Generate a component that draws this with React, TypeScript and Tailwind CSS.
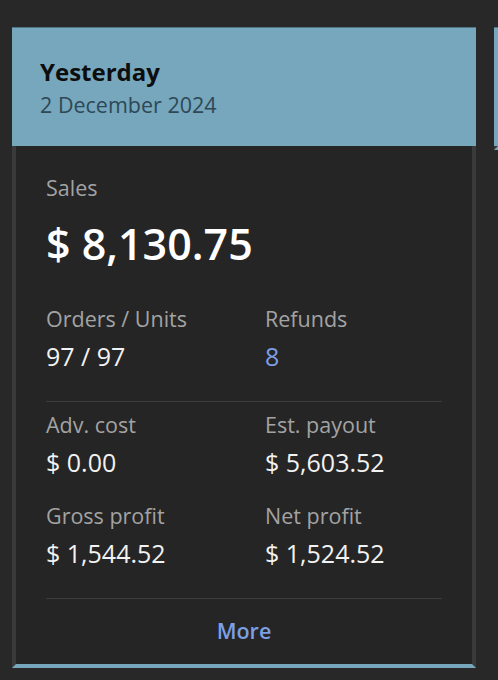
import React from 'react';

type Stat = { label: string; value: string; accent?: boolean };

const topStats: Stat[] = [
  { label: 'Orders / Units', value: '97 / 97' },
  { label: 'Refunds', value: '8', accent: true },
];

const moneyStats: Stat[] = [
  { label: 'Adv. cost', value: '$ 0.00' },
  { label: 'Est. payout', value: '$ 5,603.52' },
  { label: 'Gross profit', value: '$ 1,544.52' },
  { label: 'Net profit', value: '$ 1,524.52' },
];

const StatCell: React.FC<{ stat: Stat }> = ({ stat }) => (
  <div className="flex flex-col">
    <span className="text-[21.5px] leading-[28px] text-[#a3a3a3]">{stat.label}</span>
    <span
      className={`mt-[9px] text-[25px] leading-[28px] ${stat.accent ? 'text-[#7d9fe6]' : 'text-[#f2f2f2]'}`}
    >
      {stat.value}
    </span>
  </div>
);

const PeriodCard: React.FC = () => (
  <div className="w-[464px] shrink-0 flex flex-col">
    <div className="h-[119px] bg-[#76a7bd] border-t border-[#4f7587] pl-[28px] pt-[29px]">
      <div className="text-[24px] leading-[30px] font-bold text-[#0d0d0d]">Yesterday</div>
      <div className="mt-[4px] text-[21.5px] leading-[28px] text-[#2e4856]">2 December 2024</div>
    </div>
    <div className="bg-[#252525] border-x-4 border-[#3a3a3a] border-b-4 border-b-[#76a7bd] px-[30px]">
      <div className="pt-[28px] text-[21.5px] leading-[28px] text-[#a3a3a3]">Sales</div>
      <div className="mt-[18px] text-[43px] leading-[48px] font-semibold text-white">$ 8,130.75</div>
      <div className="mt-[37px] grid grid-cols-[219px_1fr] pb-[31px]">
        {topStats.map((s) => (
          <StatCell key={s.label} stat={s} />
        ))}
      </div>
      <div className="border-t border-[#3c3c3c]" />
      <div className="grid grid-cols-[219px_1fr] gap-y-[26px] pt-[9px] pb-[31px]">
        {moneyStats.map((s) => (
          <StatCell key={s.label} stat={s} />
        ))}
      </div>
      <div className="border-t border-[#3c3c3c]" />
      <div className="h-[65px] flex items-center justify-center">
        <span className="text-[21.5px] font-semibold text-[#7d9fe6]">More</span>
      </div>
    </div>
  </div>
);

// next card in the carousel, only its edge is in view
const NextCard: React.FC = () => (
  <div className="w-[464px] shrink-0 flex flex-col">
    <div className="h-[119px] bg-[#76a7bd] border-t border-[#4f7587]" />
    <div className="flex-1 max-h-[521px] bg-[#252525] border-x-4 border-[#3a3a3a] border-b-4 border-b-[#76a7bd]" />
  </div>
);

export default function App() {
  return (
    <div
      className="w-[498px] h-[680px] overflow-hidden bg-[#282828] pt-[27px] pl-[12px] flex items-start gap-[18px]"
      style={{ fontFamily: '"Open Sans", "Noto Sans", sans-serif' }}
    >
      <PeriodCard />
      <NextCard />
    </div>
  );
}
